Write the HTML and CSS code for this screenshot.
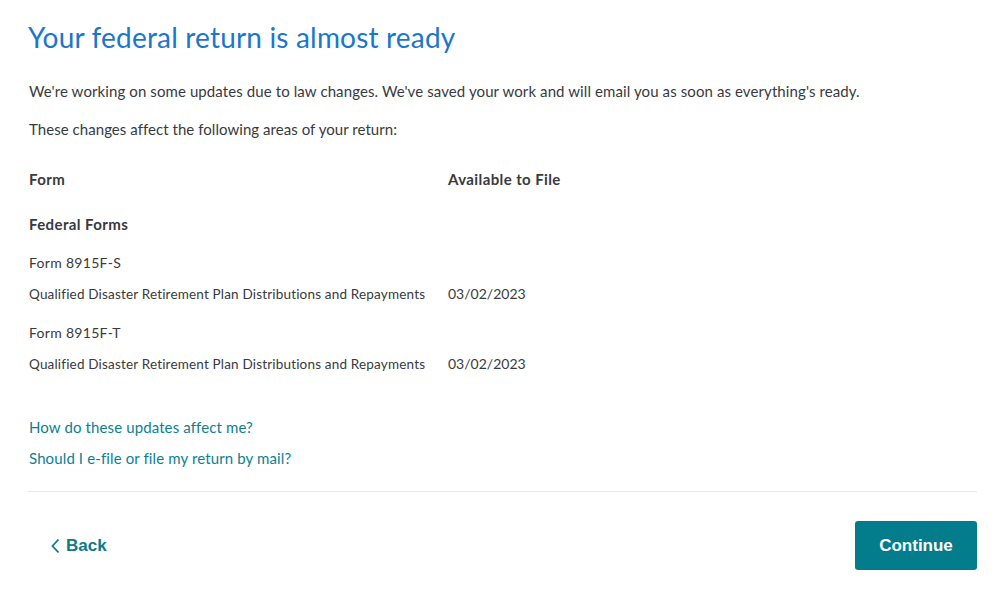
FILE: index.html
```html
<!DOCTYPE html>
<html>
<head>
<meta charset="utf-8">
<link rel="stylesheet" href="styles.css">
</head>
<body>
<main class="page">
  <h1 class="title">Your federal return is almost ready</h1>
  <p class="intro">We're working on some updates due to law changes. We've saved your work and will email you as soon as everything's ready.</p>
  <p class="intro second">These changes affect the following areas of your return:</p>

  <div class="table">
    <div class="row head">
      <div class="col-form">Form</div>
      <div class="col-date">Available to File</div>
    </div>
    <div class="group">Federal Forms</div>
    <div class="form-name">Form 8915F-S</div>
    <div class="row item">
      <div class="col-form desc">Qualified Disaster Retirement Plan Distributions and Repayments</div>
      <div class="col-date date">03/02/2023</div>
    </div>
    <div class="form-name">Form 8915F-T</div>
    <div class="row item">
      <div class="col-form desc">Qualified Disaster Retirement Plan Distributions and Repayments</div>
      <div class="col-date date">03/02/2023</div>
    </div>
  </div>

  <div class="links">
    <a class="link" href="#">How do these updates affect me?</a>
    <a class="link" href="#">Should I e-file or file my return by mail?</a>
  </div>

  <footer class="actions">
    <a class="back" href="#"><svg class="chev" width="10" height="16" viewBox="0 0 10 16"><path d="M8.5 1.5 L2.5 8 L8.5 14.5" fill="none" stroke="currentColor" stroke-width="1.8"/></svg>Back</a>
    <button class="continue">Continue</button>
  </footer>
</main>
</body>
</html>
```

FILE: styles.css
```css
* { box-sizing: border-box; }
html, body { margin: 0; padding: 0; background: #fff; }
body {
  font-family: "Lato", "Noto Sans", sans-serif;
  color: #393a3d;
}
.page {
  padding: 18px 22px 0 28px;
}
.title {
  margin: 0;
  font-weight: 400;
  font-size: 28px;
  line-height: 38px;
  letter-spacing: 0.18px;
  color: #1b76cc;
}
.intro {
  margin: 25px 0 0 1px;
  font-size: 15px;
  line-height: 20px;
  letter-spacing: 0.1px;
}
.intro.second {
  margin-top: 18px;
  letter-spacing: 0.05px;
}
.table {
  margin-top: 30px;
  padding-left: 1px;
}
.row {
  display: flex;
  align-items: baseline;
}
.col-form { width: 419px; flex: none; }
.head {
  font-weight: 700;
  font-size: 15px;
  line-height: 20px;
  letter-spacing: 0.4px;
}
.group {
  margin-top: 25px;
  font-weight: 700;
  font-size: 15px;
  line-height: 20px;
  letter-spacing: 0.4px;
}
.form-name {
  margin-top: 19px;
  font-size: 14px;
  line-height: 20px;
  letter-spacing: 0.3px;
}
.item {
  margin-top: 11px;
}
.desc { font-size: 13.5px; line-height: 20px; letter-spacing: 0.18px; }
.date { font-size: 14px; line-height: 20px; }
.links {
  margin-top: 43px;
  padding-left: 1px;
  display: flex;
  flex-direction: column;
  gap: 11px;
}
.link {
  color: #0d7f90;
  text-decoration: none;
  font-size: 15px;
  line-height: 20px;
  letter-spacing: 0.12px;
}
.actions {
  margin-top: 23px;
  border-top: 1px solid #e9e9eb;
  display: flex;
  justify-content: space-between;
  align-items: center;
  padding-top: 29px;
}
.back {
  display: flex;
  align-items: center;
  gap: 6px;
  margin-left: 22px;
  color: #0d7a8a;
  text-decoration: none;
  font-family: "Liberation Sans", Arial, sans-serif;
  font-weight: 700;
  font-size: 17px;
}
.chev { display: block; }
.continue {
  width: 122px;
  height: 49px;
  border: 0;
  border-radius: 3px;
  background: #037c8c;
  color: #fff;
  font-family: "Liberation Sans", Arial, sans-serif;
  font-weight: 700;
  font-size: 17px;
  cursor: pointer;
}
```
